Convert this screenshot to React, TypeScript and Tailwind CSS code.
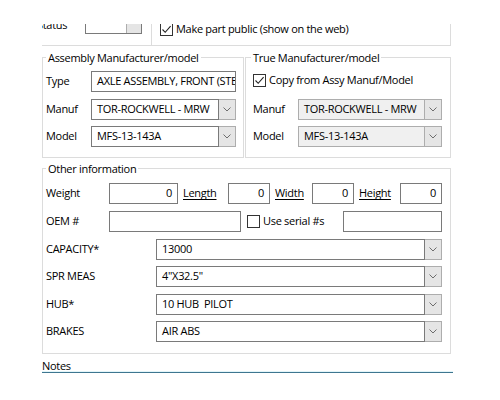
import clsx from 'clsx';

function Chevron() {
  return (
    <svg width="8" height="5" viewBox="0 0 8 5" className="block">
      <path d="M0.5 0.5 L4 4 L7.5 0.5" fill="none" stroke="#6d6d6d" strokeWidth="1" />
    </svg>
  );
}

function CheckBox({ checked }: { checked?: boolean }) {
  return (
    <div className="w-[13px] h-[13px] shrink-0 border border-[#333333] bg-white flex items-center justify-center">
      {checked && (
        <svg width="11" height="11" viewBox="0 0 11 11" className="block">
          <path d="M1.5 5.5 L4.2 8.3 L9.6 2.2" fill="none" stroke="#222222" strokeWidth="1.1" />
        </svg>
      )}
    </div>
  );
}

function TextBox({ value, width, right }: { value?: string; width?: string; right?: boolean }) {
  return (
    <div
      className={clsx(
        'h-[21px] shrink-0 min-w-0 border border-[#7a7a7a] bg-white flex items-center overflow-hidden whitespace-nowrap',
        right ? 'justify-end pr-[5px]' : 'pl-[5px]',
        width
      )}
    >
      {value}
    </div>
  );
}

function Combo({ value, disabled }: { value: string; disabled?: boolean }) {
  return (
    <div className="h-[21px] flex flex-1 min-w-0">
      <div
        className={clsx(
          'flex-1 min-w-0 border flex items-center pl-[5px] whitespace-pre overflow-hidden',
          disabled ? 'bg-[#f0f0f0] border-[#adadad]' : 'bg-white border-[#7a7a7a]'
        )}
      >
        {value}
      </div>
      <div className="w-[17px] shrink-0 border border-l-0 border-[#adadad] bg-[#e5e5e5] flex items-center justify-center">
        <Chevron />
      </div>
    </div>
  );
}

function Row({ label, labelWidth, className, children }: { label: string; labelWidth: string; className?: string; children: React.ReactNode }) {
  return (
    <div className={clsx('flex items-center h-[21px] min-w-0', className)}>
      <span className={clsx('shrink-0 whitespace-nowrap', labelWidth)}>{label}</span>
      {children}
    </div>
  );
}

function LinkLabel({ text, width }: { text: string; width: string }) {
  return (
    <span className={clsx('shrink-0 pl-[5px]', width)}>
      <span className="underline underline-offset-2">{text}</span>
    </span>
  );
}

export default function App() {
  return (
    <div className="w-[500px] h-[400px] bg-white overflow-hidden text-[11px] tracking-[-0.3px] text-black font-['Open_Sans',sans-serif]">
      <div className="ml-[42px] w-[409px] pt-[24px]">
        {/* status strip, scrolled so its top is cut off */}
        <div className="flex items-start h-[22px] overflow-hidden border-b border-r border-[#dcdcdc]">
          <div className="ml-[-5px] w-[48px] h-[20px] mt-[-9px] flex items-center shrink-0">Status</div>
          <div className="w-[57px] h-[20px] mt-[-10px] flex shrink-0 border border-[#7a7a7a] bg-white">
            <div className="flex-1" />
            <div className="w-[15px] bg-[#e5e5e5] border-l border-[#adadad]" />
          </div>
          <div className="ml-[9px] w-px h-full bg-[#dcdcdc] shrink-0" />
          <div className="ml-[8px] mt-[-3px] flex items-center gap-[3px] whitespace-nowrap">
            <CheckBox checked />
            <span>Make part public (show on the web)</span>
          </div>
        </div>

        <div className="flex gap-px mt-[4px]">
          <fieldset className="w-[202px] min-w-0 shrink-0 border border-[#dcdcdc] pl-[3px] pr-[7px] pb-[10px]">
            <legend className="px-[2px] leading-[15px]">Assembly Manufacturer/model</legend>
            <Row label="Type" labelWidth="w-[45px]" className="mt-[6px]">
              <TextBox value="AXLE ASSEMBLY, FRONT (STEER)" width="w-[145px]" />
            </Row>
            <Row label="Manuf" labelWidth="w-[45px]" className="mt-[7px]">
              <Combo value="TOR-ROCKWELL - MRW" />
            </Row>
            <Row label="Model" labelWidth="w-[45px]" className="mt-[6px]">
              <Combo value="MFS-13-143A" />
            </Row>
          </fieldset>

          <fieldset className="w-[206px] min-w-0 shrink-0 border border-[#dcdcdc] pl-[7px] pr-[8px] pb-[10px]">
            <legend className="ml-[-2px] px-[2px] leading-[15px]">True Manufacturer/model</legend>
            <div className="flex items-center gap-[3px] h-[21px] mt-[5px] whitespace-nowrap">
              <CheckBox checked />
              <span>Copy from Assy Manuf/Model</span>
            </div>
            <Row label="Manuf" labelWidth="w-[45px]" className="mt-[8px]">
              <Combo value="TOR-ROCKWELL - MRW" disabled />
            </Row>
            <Row label="Model" labelWidth="w-[45px]" className="mt-[6px]">
              <Combo value="MFS-13-143A" disabled />
            </Row>
          </fieldset>
        </div>

        <fieldset className="mt-[3px] min-w-0 border border-[#dcdcdc] pl-[3px] pr-[8px] pb-[11px]">
          <legend className="px-[2px] leading-[15px]">Other information</legend>
          <Row label="Weight" labelWidth="w-[63px]" className="mt-[7px]">
            <TextBox value="0" width="w-[69px]" right />
            <LinkLabel text="Length" width="w-[50px]" />
            <TextBox value="0" width="w-[42px]" right />
            <LinkLabel text="Width" width="w-[42px]" />
            <TextBox value="0" width="w-[42px]" right />
            <LinkLabel text="Height" width="w-[46px]" />
            <TextBox value="0" width="w-[42px]" right />
          </Row>
          <Row label="OEM #" labelWidth="w-[63px]" className="mt-[7px]">
            <TextBox width="w-[132px]" />
            <div className="ml-[6px] flex items-center gap-[3px] whitespace-nowrap">
              <CheckBox />
              <span>Use serial #s</span>
            </div>
            <div className="ml-auto">
              <TextBox width="w-[99px]" />
            </div>
          </Row>
          <Row label="CAPACITY*" labelWidth="w-[110px]" className="mt-[7px]">
            <Combo value="13000" />
          </Row>
          <Row label="SPR MEAS" labelWidth="w-[110px]" className="mt-[6px]">
            <Combo value={'4"X32.5"'} />
          </Row>
          <Row label="HUB*" labelWidth="w-[110px]" className="mt-[7px]">
            <Combo value="10 HUB  PILOT" />
          </Row>
          <Row label="BRAKES" labelWidth="w-[110px]" className="mt-[6px]">
            <Combo value="AIR ABS" />
          </Row>
        </fieldset>

        <div className="mt-[4px] h-[13px] leading-[16px]">Notes</div>
        <div className="w-[411px] h-px bg-[#e2f5f9]" />
        <div className="w-[411px] h-px bg-[#3e7690]" />
      </div>
    </div>
  );
}
